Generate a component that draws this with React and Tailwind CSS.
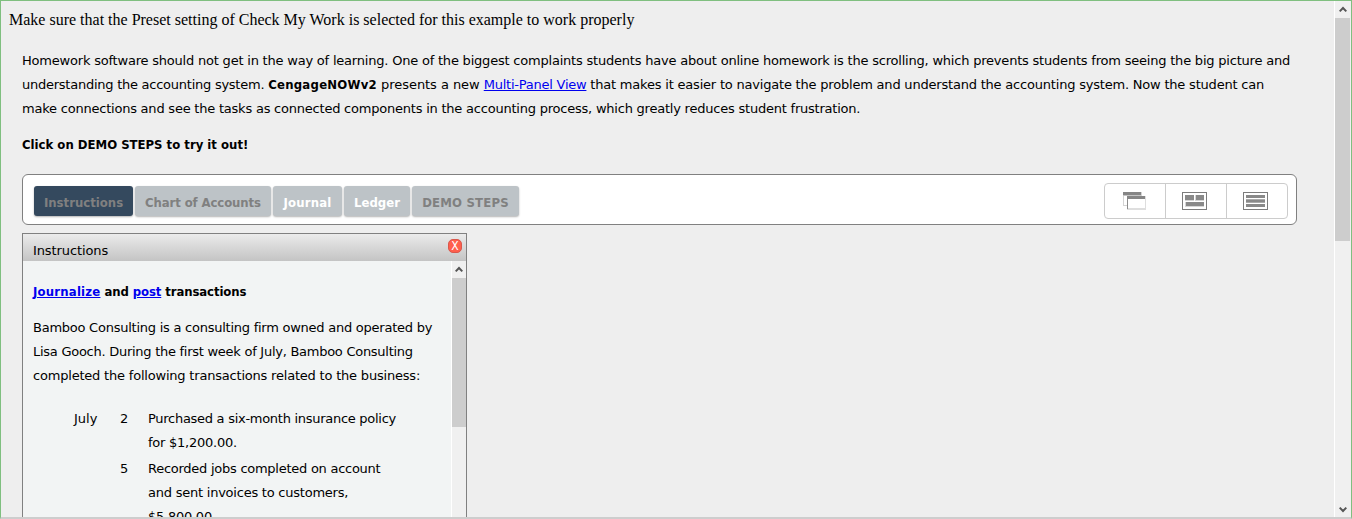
import React from "react";

const tabs = [
  { label: "Instructions", cls: "w-[99px] bg-[#34495e] text-[#808080]", ls: "" },
  { label: "Chart of Accounts", cls: "w-[136px] bg-[#bdc3c7] text-[#808080]", ls: "tracking-[-0.1px]" },
  { label: "Journal", cls: "w-[69px] bg-[#bdc3c7] text-white", ls: "tracking-[0.2px]" },
  { label: "Ledger", cls: "w-[66px] bg-[#bdc3c7] text-white", ls: "" },
  { label: "DEMO STEPS", cls: "w-[107px] bg-[#bdc3c7] text-[#808080]", ls: "tracking-[0.2px]" },
];

function Line({ className = "", children }) {
  return <div className={"h-6 leading-6 whitespace-nowrap " + className}>{children}</div>;
}

function Arrow({ down }) {
  return (
    <svg width="8" height="7" viewBox="0 0 8 7" className={down ? "rotate-180" : ""}>
      <path d="M0.7 5.4 L4 2 L7.3 5.4" fill="none" stroke="#555" strokeWidth="2" />
    </svg>
  );
}

function WindowsIcon() {
  return (
    <svg width="24" height="18" viewBox="0 0 24 18" shapeRendering="crispEdges">
      <rect x="0.5" y="0.5" width="18" height="13" fill="#fff" stroke="#d4d4d4" />
      <rect x="0" y="0" width="18" height="3" fill="#858585" />
      <rect x="0" y="3" width="18" height="1" fill="#c4c4c4" />
      <rect x="4" y="4" width="19" height="14" fill="#dedede" />
      <rect x="5" y="7" width="17" height="9" fill="#fff" />
      <rect x="4" y="4" width="1" height="13" fill="#8c8c8c" />
      <rect x="4" y="4" width="18" height="3" fill="#858585" />
    </svg>
  );
}

function PanelsIcon() {
  return (
    <svg width="25" height="18" viewBox="0 0 25 18" shapeRendering="crispEdges">
      <rect x="0.5" y="0.5" width="24" height="17" fill="#fff" stroke="#7c7c7c" />
      <path d="M3 3h9v6H3zM13 3h9v6h-9zM3 10h19v5H3z" fill="#d6d6d6" />
      <path d="M3 3h9v5H3zM14 3h8v5h-8zM4 10h18v4H4z" fill="#898989" />
    </svg>
  );
}

function RowsIcon() {
  return (
    <svg width="25" height="18" viewBox="0 0 25 18" shapeRendering="crispEdges">
      <rect x="0.5" y="0.5" width="24" height="17" fill="#fff" stroke="#7c7c7c" />
      <path d="M3 3h19v3H3zM3 8h19v2H3zM3 12h19v3H3z" fill="#898989" />
      <path d="M3 7h19v1H3zM3 10h19v1H3z" fill="#aaaaaa" />
    </svg>
  );
}

export default function App() {
  return (
    <div className="flex h-[519px] w-[1352px] overflow-hidden border border-b-2 border-[#7fbf7f] border-b-[#cdcdcd] bg-[#eeeeee] text-black">
      <main className="flex w-[1333px] shrink-0 flex-col overflow-hidden font-['DejaVu_Sans',sans-serif] text-[13px]">
        <p className="mt-2 h-[22px] pl-2 font-['Liberation_Serif',serif] text-base leading-[22px] whitespace-nowrap">
          Make sure that the Preset setting of Check My Work is selected for this example to work properly
        </p>
        <section className="mt-[18px] ml-[21px]">
          <Line className="tracking-[-0.206px]">Homework software should not get in the way of learning. One of the biggest complaints students have about online homework is the scrolling, which prevents students from seeing the big picture and</Line>
          <Line className="tracking-[-0.202px]">
            <span className="tracking-[-0.25px]">understanding the accounting system. </span>
            <b className="font-['DejaVu_Sans_Condensed','DejaVu_Sans',sans-serif] tracking-[0.25px]">CengageNOWv2</b>
            <span className="tracking-[-0.05px]"> presents a new </span>
            <a className="tracking-[-0.24px] text-[#0000ee] underline">Multi-Panel View</a> that makes it easier to navigate the problem and understand the accounting system. Now the student can
          </Line>
          <Line className="tracking-[-0.22px]">make connections and see the tasks as connected components in the accounting process, which greatly reduces student frustration.</Line>
          <Line className="mt-3 font-['DejaVu_Sans_Condensed','DejaVu_Sans',sans-serif] font-bold">Click on DEMO STEPS to try it out!</Line>
        </section>

        <nav className="mt-[17px] ml-[21px] flex h-[51px] w-[1275px] shrink-0 justify-between rounded-[6px] border border-[#808080] bg-white">
          <div className="flex gap-[2px] pt-[11px] pl-[11px] font-['DejaVu_Sans_Condensed','DejaVu_Sans',sans-serif]">
            {tabs.map((t) => (
              <button key={t.label} className={"flex h-[30px] items-center justify-center rounded-[3px] pt-[3px] font-bold whitespace-nowrap shadow-[0_1px_2px_rgba(0,0,0,0.3)] " + t.cls}>
                <span className={t.ls}>{t.label}</span>
              </button>
            ))}
          </div>
          <div className="mt-2 mr-2 flex h-9 w-[184px] divide-x divide-[#cccccc] rounded-[4px] border border-[#cccccc]">
            <div className="flex w-[61px] items-center justify-center"><WindowsIcon /></div>
            <div className="flex w-[61px] items-center justify-center pr-[3px]"><PanelsIcon /></div>
            <div className="flex w-[60px] items-center justify-center pr-[3px]"><RowsIcon /></div>
          </div>
        </nav>

        <section className="mt-2 ml-[21px] flex w-[445px] flex-1 flex-col overflow-hidden border border-b-0 border-[#808080] bg-[#f2f4f4]">
          <header className="flex h-[27px] shrink-0 justify-between bg-linear-to-b from-[#ebebeb] to-[#c4c4c4] pl-[10px]">
            <span className="leading-[33px] tracking-[-0.1px]">Instructions</span>
            <span className="mt-[5px] mr-1 flex h-[14px] w-[14px] items-center justify-center rounded-[5px] border border-[#d9584c] bg-[#ff5f4c] font-['DejaVu_Sans_Condensed','DejaVu_Sans',sans-serif] text-[12px] leading-none text-white">X</span>
          </header>
          <div className="flex min-h-0 flex-1 overflow-hidden">
            <div className="w-[428px] shrink-0 pt-[19px] pl-[10px]">
              <Line className="font-['DejaVu_Sans_Condensed','DejaVu_Sans',sans-serif] font-bold tracking-[-0.1px]">
                <a className="tracking-[0.2px] text-[#0000ee] underline">Journalize</a> and <a className="text-[#0000ee] underline">post</a> transactions
              </Line>
              <div className="mt-3">
                <Line className="tracking-[-0.245px]">Bamboo Consulting is a consulting firm owned and operated by</Line>
                <Line className="tracking-[-0.265px]">Lisa Gooch. During the first week of July, Bamboo Consulting</Line>
                <Line className="tracking-[-0.2px]">completed the following transactions related to the business:</Line>
              </div>
              <div className="mt-[19px] grid grid-cols-[46px_28px_1fr] gap-y-[2px] pl-[41px]">
                <Line>July</Line>
                <Line>2</Line>
                <div>
                  <Line className="tracking-[-0.28px]">Purchased a six-month insurance policy</Line>
                  <Line className="tracking-[-0.25px]">for $1,200.00.</Line>
                </div>
                <span />
                <Line>5</Line>
                <div>
                  <Line className="tracking-[-0.26px]">Recorded jobs completed on account</Line>
                  <Line className="tracking-[-0.23px]">and sent invoices to customers,</Line>
                  <Line className="tracking-[-0.25px]">$5,800.00</Line>
                </div>
              </div>
            </div>
            <div className="flex w-[15px] shrink-0 flex-col border-l border-white bg-[#f0f0f0]">
              <div className="flex h-[17px] shrink-0 items-center justify-center"><Arrow /></div>
              <div className="h-[149px] bg-[#cdcdcd]" />
            </div>
          </div>
        </section>
      </main>
      <aside className="flex w-[17px] shrink-0 flex-col border-l border-white bg-[#f0f0f0]">
        <div className="flex h-[17px] items-center justify-center"><Arrow /></div>
        <div className="mr-px h-[223px] bg-[#cdcdcd]" />
        <div className="mt-auto flex h-[15px] items-center justify-center"><Arrow down /></div>
      </aside>
    </div>
  );
}
